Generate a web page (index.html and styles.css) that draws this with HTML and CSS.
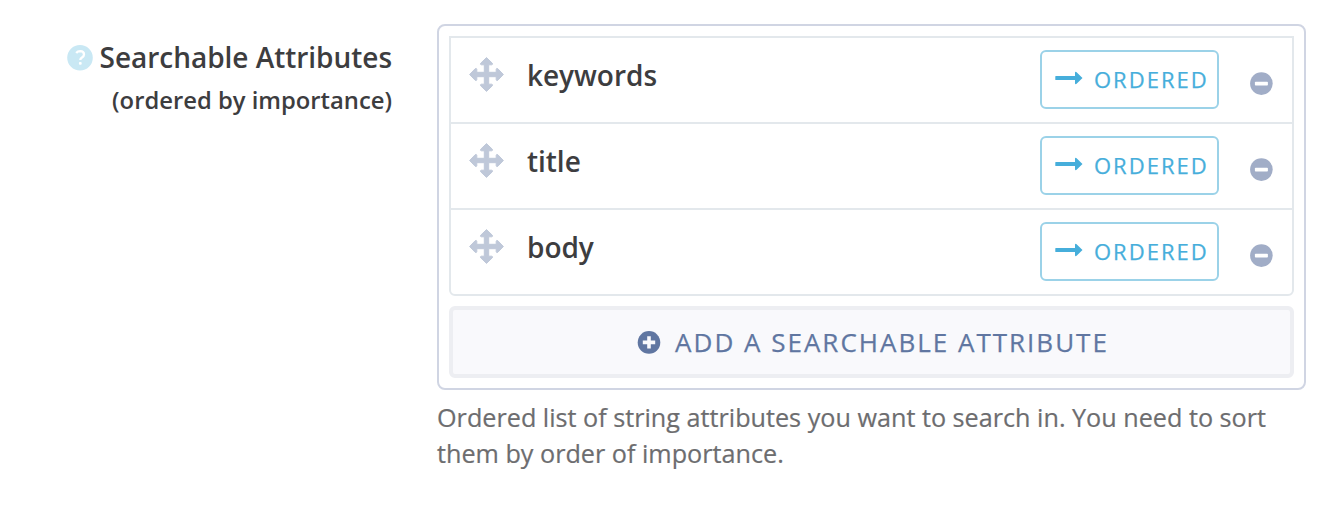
FILE: index.html
```html
<!DOCTYPE html>
<html lang="en">
<head>
<meta charset="utf-8">
<title>Searchable Attributes</title>
<link rel="stylesheet" href="styles.css">
</head>
<body>
<svg class="defs" width="0" height="0">
  <symbol id="move" viewBox="0 0 35 35"><path d="M17.5 0.6 L23.3 6.2 Q24.1 7.6 22.6 7.8 H19.7 V15.3 H27.2 V12.4 Q27.4 10.9 28.8 11.7 L34.4 17.5 L28.8 23.3 Q27.4 24.1 27.2 22.6 V19.7 H19.7 V27.2 H22.6 Q24.1 27.4 23.3 28.8 L17.5 34.4 L11.7 28.8 Q10.9 27.4 12.4 27.2 H15.3 V19.7 H7.8 V22.6 Q7.6 24.1 6.2 23.3 L0.6 17.5 L6.2 11.7 Q7.6 10.9 7.8 12.4 V15.3 H15.3 V7.8 H12.4 Q10.9 7.6 11.7 6.2 Z" stroke-width="1" stroke="currentColor" stroke-linejoin="round" fill="currentColor"/></symbol>
  <symbol id="arrow" viewBox="0 0 28 14"><path d="M0.8 5 H20 V1.5 Q20.4 0.4 21.6 1.2 L27.5 7 L21.6 12.8 Q20.4 13.6 20 12.5 V9 H0.8 Q0.3 9 0.3 8.5 V5.5 Q0.3 5 0.8 5Z" fill="currentColor"/></symbol>
  <symbol id="minus" viewBox="0 0 24 24"><circle cx="12.4" cy="11.6" r="11.3" fill="currentColor"/><rect x="5.9" y="9.7" width="13" height="3.8" rx=".8" fill="#fff"/></symbol>
</svg>
<main class="field">
  <div class="label">
    <div class="title"><svg class="help" viewBox="0 0 26 26"><circle cx="13" cy="12.8" r="12.8" fill="#c9e8f4"/><path d="M9.2 8 Q10.7 6.1 13.3 6.1 Q17 6.3 17 9.4 Q17 11.2 15 12.4 Q13.3 13.4 13.3 15" fill="none" stroke="#fff" stroke-width="2.3"/><rect x="11.9" y="17" width="2.8" height="2.8" rx="1" fill="#fff"/></svg><span class="title-text">Searchable Attributes</span></div>
    <div class="subtitle">(ordered by importance)</div>
  </div>
  <div class="control">
    <div class="panel">
      <div class="list">
        <div class="row"><svg class="move"><use href="#move"/></svg><span class="name">keywords</span><button class="order"><svg class="arrow"><use href="#arrow"/></svg><span>ORDERED</span></button><svg class="minus"><use href="#minus"/></svg></div>
        <div class="row"><svg class="move"><use href="#move"/></svg><span class="name">title</span><button class="order"><svg class="arrow"><use href="#arrow"/></svg><span>ORDERED</span></button><svg class="minus"><use href="#minus"/></svg></div>
        <div class="row"><svg class="move"><use href="#move"/></svg><span class="name">body</span><button class="order"><svg class="arrow"><use href="#arrow"/></svg><span>ORDERED</span></button><svg class="minus"><use href="#minus"/></svg></div>
      </div>
      <button class="add"><svg class="plus" viewBox="0 0 24 24"><circle cx="12" cy="12.4" r="11.3" fill="currentColor"/><path d="M5.8 12.4H18.2M12 6.2V18.6" stroke="#f9f9fc" stroke-width="3.6"/></svg><span>ADD A SEARCHABLE ATTRIBUTE</span></button>
    </div>
    <p class="hint">Ordered list of string attributes you want to search in. You need to sort<br>them by order of importance.</p>
  </div>
</main>
</body>
</html>
```
FILE: styles.css
```css
* { box-sizing: border-box; }
body { margin: 0; background: #fff; font-family: "Open Sans", sans-serif; color: #3d3d3f; }
svg { display: block; flex: none; }
.defs { position: absolute; }
button { font: inherit; margin: 0; padding: 0; }
.field { display: flex; padding-top: 24px; }
.label { width: 392px; margin-right: 45px; padding-top: 13px; font-weight: 600; white-space: nowrap; }
.title { display: flex; justify-content: flex-end; font-size: 28px; line-height: 41px; letter-spacing: -0.03px; }
.help { width: 26px; height: 26px; margin: 8px 7px 0 0; }
.subtitle { margin-top: 2px; text-align: right; font-size: 23.8px; line-height: 40px; }
.control { width: 869px; }
.panel { height: 366px; padding: 10px; border: 2px solid #d0d5e3; border-radius: 8px; }
.list { border: 2px solid #e3e8ec; border-radius: 0 0 6px 6px; }
.row { display: flex; align-items: flex-start; height: 86px; padding: 12px 19px 0 18px; border-bottom: 2px solid #e3e8ec; }
.row:last-child { height: 84px; border-bottom: 0; }
.move { width: 35px; height: 35px; margin-top: 7px; color: #bfc8d9; }
.name { flex: 1; margin: 5px 0 0 23px; font-size: 28px; line-height: 41px; font-weight: 600; letter-spacing: -0.03px; }
.order { display: flex; width: 179px; height: 59px; padding-left: 13px; border: 2px solid #9bd2e8; border-radius: 6px; background: #fff; color: #46aedb; font-size: 22px; line-height: 55px; letter-spacing: 2px; white-space: nowrap; -webkit-text-stroke: 0.25px; }
.arrow { width: 28px; height: 14px; margin: 19px 11px 0 0; }
.minus { width: 24px; height: 24px; margin: 22px 0 0 30px; color: #a1adc7; }
.add { display: flex; justify-content: center; width: 100%; height: 72px; margin-top: 10px; padding-left: 3px; border: 4px solid #edeef2; border-radius: 6px; background: #f9f9fc; color: #6076a1; font-size: 26px; line-height: 64px; letter-spacing: 2px; white-space: nowrap; -webkit-text-stroke: 0.25px; }
.plus { width: 24px; height: 24px; margin: 20px 14px 0 0; }
.hint { margin: 9px 0 0; color: #6d6d6f; font-size: 25.2px; line-height: 36px; white-space: nowrap; -webkit-text-stroke: 0.2px; }
```
